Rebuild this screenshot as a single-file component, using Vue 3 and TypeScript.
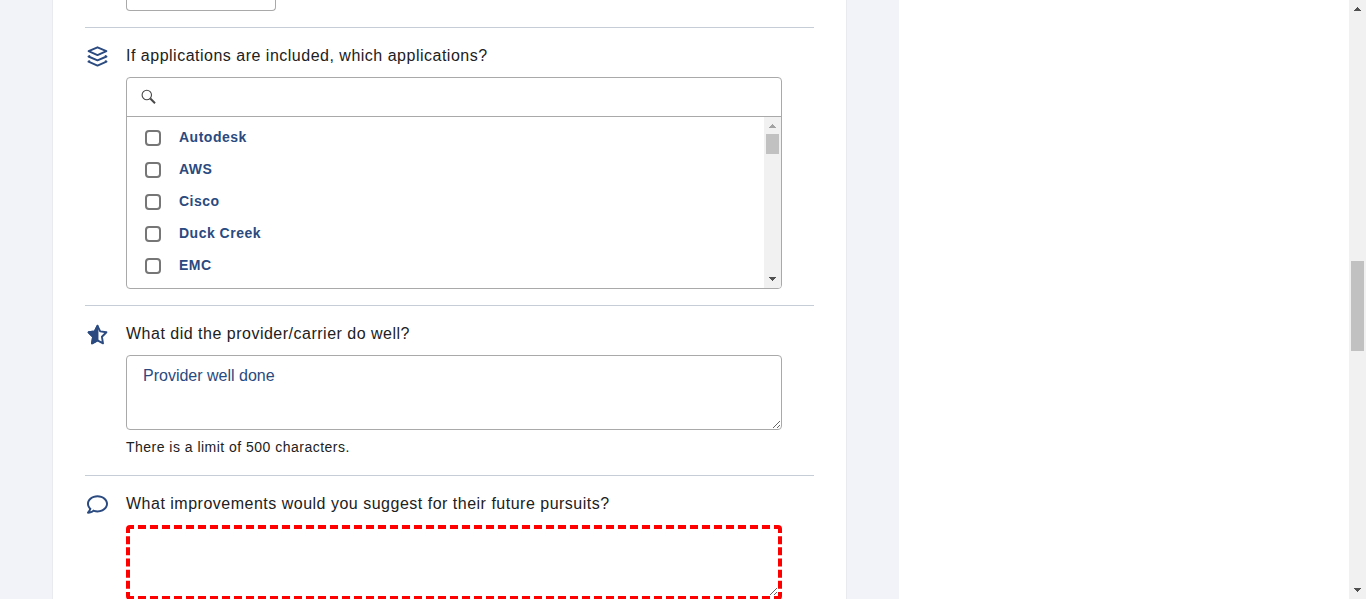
<script setup lang="ts">
import { ref } from 'vue'

const applications: string[] = ['Autodesk', 'AWS', 'Cisco', 'Duck Creek', 'EMC']
const selected = ref<string[]>([])
const search = ref('')
const strengths = ref('Provider well done')
const improvements = ref('')
</script>

<template>
  <div class="page">
    <div class="shell">
      <main class="survey">
        <section class="question first">
          <div class="short-field"></div>
        </section>

        <section class="question apps">
          <svg class="icon" viewBox="0 0 21 21" fill="none" stroke="#2a4a80" stroke-width="1.9" stroke-linejoin="round" stroke-linecap="round">
            <path d="M10.500 1.300 19.400 5.200 10.500 9.100 1.600 5.200Z" />
            <path d="M2.400 10 1.500 10.500 10.500 14.300 19.500 10.500 18.600 10" />
            <path d="M2.400 15.200 1.500 15.700 10.500 19.600 19.500 15.700 18.600 15.200" />
          </svg>
          <div class="body">
            <h2>If applications are included, which applications?</h2>
            <div class="picker">
              <label class="search">
                <svg width="16" height="16" viewBox="0 0 16 16" fill="none" stroke="#484848">
                  <circle cx="5.800" cy="6" r="4.700" stroke-width="1.100" />
                  <path d="M9.300 9.500 14 14.200" stroke-width="2" />
                </svg>
                <input v-model="search" type="text" aria-label="Search applications" />
              </label>
              <div class="list">
                <div class="options">
                  <label v-for="name in applications" :key="name" class="option">
                    <input v-model="selected" type="checkbox" :value="name" />
                    <span>{{ name }}</span>
                  </label>
                </div>
                <div class="bar">
                  <svg class="arrow" width="17" height="17" viewBox="0 0 17 17" shape-rendering="crispEdges" fill="#a3a3a3"><path d="M8 7h1v1h1v1h1v1h1v1H5v-1h1V9h1V8h1z" /></svg>
                  <div class="thumb"></div>
                  <svg class="arrow end" width="17" height="17" viewBox="0 0 17 17" shape-rendering="crispEdges" fill="#505050"><path d="M5 6h7v1h-1v1h-1v1H9v1H8V9H7V8H6V7H5z" /></svg>
                </div>
              </div>
            </div>
          </div>
        </section>

        <section class="question strengths">
          <svg class="icon" viewBox="0 0 21 21" fill="none" stroke="#2a4a80" stroke-width="1.900" stroke-linejoin="round">
            <path d="M10.500 1.800 13.200 7.400 19.400 8.300 14.900 12.700 16 19.300 10.500 16.300 5 19.300 6.100 12.700 1.600 8.300 7.800 7.400Z" />
            <path d="M10.500 1.800V16.300L5 19.300 6.100 12.700 1.600 8.300 7.800 7.400Z" fill="#2a4a80" />
          </svg>
          <div class="body">
            <h2>What did the provider/carrier do well?</h2>
            <textarea v-model="strengths" maxlength="500"></textarea>
            <p class="hint">There is a limit of 500 characters.</p>
          </div>
        </section>

        <section class="question">
          <svg class="icon" viewBox="0 0 512 512" fill="#2a4a80">
            <path d="M256 32C114.600 32 0 125.100 0 240c0 47.600 19.900 91.200 52.900 126.300C38 405.700 7 439.100 6.500 439.500c-6.600 7-8.400 17.200-4.600 26S14.400 480 24 480c61.500 0 110-25.700 139.100-46.300C192 442.800 223.200 448 256 448c141.400 0 256-93.100 256-208S397.400 32 256 32zm0 368c-26.700 0-53.100-4.100-78.400-12.100l-22.700-7.200-19.500 13.800c-14.300 10.100-33.900 21.400-57.500 29 7.300-12.100 14.400-25.700 19.900-40.200l10.600-28.100-20.600-21.800C69.700 314.100 48 282.200 48 240c0-88.200 93.300-160 208-160s208 71.800 208 160-93.300 160-208 160z" />
          </svg>
          <div class="body">
            <h2>What improvements would you suggest for their future pursuits?</h2>
            <textarea v-model="improvements" class="invalid"></textarea>
          </div>
        </section>
      </main>
    </div>
    <div class="side"></div>
    <div class="bar page-bar">
      <svg class="arrow" width="17" height="17" viewBox="0 0 17 17" shape-rendering="crispEdges" fill="#505050"><path d="M8 7h1v1h1v1h1v1h1v1H5v-1h1V9h1V8h1z" /></svg>
      <div class="thumb"></div>
      <svg class="arrow end" width="17" height="17" viewBox="0 0 17 17" shape-rendering="crispEdges" fill="#505050"><path d="M5 6h7v1h-1v1h-1v1H9v1H8V9H7V8H6V7H5z" /></svg>
    </div>
  </div>
</template>

<style>
html,
body {
  overflow: hidden;
  background: #fff;
}
</style>

<style scoped>
.page,
.page * {
  box-sizing: border-box;
}
.page {
  display: flex;
  width: 1366px;
  height: 599px;
  overflow: hidden;
  font-family: 'Liberation Sans', Arial, sans-serif;
  color: #212121;
}
.shell {
  flex: none;
  width: 899px;
  padding-left: 52px;
  background: #f2f3f8;
}
.survey {
  width: 795px;
  height: 599px;
  padding: 0 32px;
  background: #fff;
  border: solid #e8eaef;
  border-width: 0 1px;
  overflow: hidden;
}
.side {
  flex: 1;
}
.question {
  display: flex;
  width: 729px;
  padding: 18px 0 0 2px;
  border-bottom: 1px solid #c6cdd6;
}
.first {
  height: 28px;
  padding: 0 0 0 41px;
}
.apps {
  height: 278px;
}
.strengths {
  height: 170px;
}
.short-field {
  width: 150px;
  height: 11px;
  border: 1px solid #a9a9a9;
  border-top: 0;
  border-radius: 0 0 4px 4px;
}
.icon {
  flex: none;
  width: 21px;
  height: 21px;
}
.body {
  width: 656px;
  margin-left: 18px;
}
h2 {
  margin: 0 0 11px;
  font-size: 16px;
  line-height: 20px;
  font-weight: 400;
  letter-spacing: 0.5px;
  white-space: nowrap;
}
.picker {
  height: 212px;
  border: 1px solid #a9a9a9;
  border-radius: 4px;
  overflow: hidden;
}
.search {
  display: flex;
  align-items: center;
  gap: 8px;
  height: 39px;
  padding: 0 14px;
  border-bottom: 1px solid #a9a9a9;
}
.search input {
  flex: 1;
  border: 0;
  outline: 0;
  font: inherit;
}
.list {
  display: flex;
  height: 171px;
}
.options {
  flex: 1;
  padding: 4px 0 0 18px;
}
.option {
  display: flex;
  align-items: center;
  gap: 18px;
  height: 32px;
  font-size: 14px;
  font-weight: 700;
  letter-spacing: 0.5px;
  color: #2a4a80;
}
.option input {
  appearance: none;
  width: 16px;
  height: 16px;
  margin: 2px 0 0;
  border: 2px solid #767676;
  border-radius: 4px;
}
.option input:checked {
  background: #2a4a80;
}
.bar {
  display: flex;
  flex-direction: column;
  align-items: center;
  width: 17px;
  background: #f1f1f1;
}
.arrow {
  display: block;
  flex: none;
}
.end {
  margin-top: auto;
}
.thumb {
  width: 13px;
  height: 20px;
  background: #c1c1c1;
}
.page-bar .thumb {
  height: 90px;
  margin-top: 244px;
}
textarea {
  display: block;
  width: 656px;
  height: 75px;
  margin: 0;
  padding: 10px 16px;
  border: 1px solid #a9a9a9;
  border-radius: 4px;
  outline: 0;
  background: #fff;
  font: 16px/20px 'Liberation Sans', Arial, sans-serif;
  color: #2a4a80;
  resize: both;
}
.invalid {
  border: 4px dashed #f00;
}
.hint {
  margin: 8px 0 0;
  font-size: 14px;
  line-height: 18px;
  letter-spacing: 0.48px;
}
</style>
